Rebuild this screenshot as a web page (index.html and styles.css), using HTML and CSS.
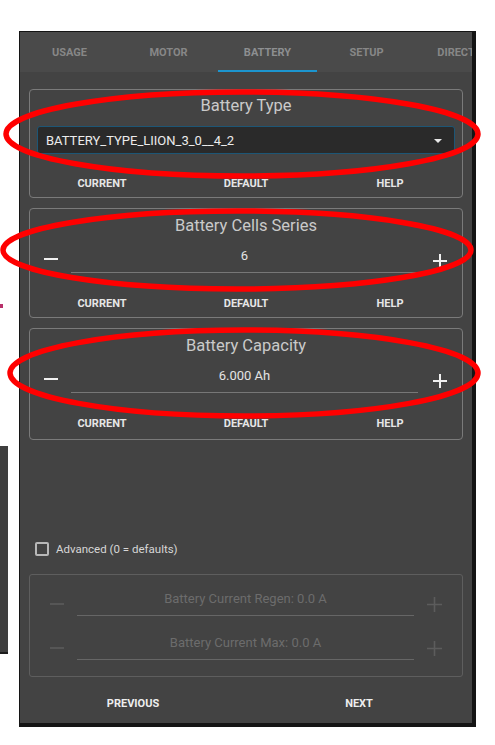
FILE: index.html
```html
<!DOCTYPE html>
<html>
<head>
<meta charset="utf-8">
<link rel="stylesheet" href="styles.css">
</head>
<body>
<div class="side-window"></div>
<div class="side-mark"></div>
<div class="phone">
  <div class="tabs">
    <div class="tab">USAGE</div>
    <div class="tab">MOTOR</div>
    <div class="tab active">BATTERY</div>
    <div class="tab">SETUP</div>
    <div class="tab tab-last">DIRECT</div>
  </div>
  <div class="content">
    <div class="card card-select">
      <div class="card-title">Battery Type</div>
      <div class="select">
        <span>BATTERY_TYPE_LIION_3_0__4_2</span>
        <svg class="caret" width="10" height="6" viewBox="0 0 10 6"><path d="M1 1h8L5 5z" fill="#e8e8e8"/></svg>
      </div>
      <div class="actions"><span>CURRENT</span><span>DEFAULT</span><span>HELP</span></div>
    </div>
    <div class="card">
      <div class="card-title">Battery Cells Series</div>
      <div class="stepper">
        <div class="step minus"><svg width="14" height="14" viewBox="0 0 14 14"><path d="M0 7h14" stroke="#f0f0f0" stroke-width="2"/></svg></div>
        <div class="field">6</div>
        <div class="step plus"><svg width="14" height="14" viewBox="0 0 14 14"><path d="M0 7h14M7 0v14" stroke="#f0f0f0" stroke-width="2"/></svg></div>
      </div>
      <div class="actions"><span>CURRENT</span><span>DEFAULT</span><span>HELP</span></div>
    </div>
    <div class="card card-last">
      <div class="card-title">Battery Capacity</div>
      <div class="stepper">
        <div class="step minus"><svg width="14" height="14" viewBox="0 0 14 14"><path d="M0 7h14" stroke="#f0f0f0" stroke-width="2"/></svg></div>
        <div class="field">6.000 Ah</div>
        <div class="step plus"><svg width="14" height="14" viewBox="0 0 14 14"><path d="M0 7h14M7 0v14" stroke="#f0f0f0" stroke-width="2"/></svg></div>
      </div>
      <div class="actions"><span>CURRENT</span><span>DEFAULT</span><span>HELP</span></div>
    </div>
    <label class="check-row"><span class="checkbox"></span><span>Advanced (0 = defaults)</span></label>
    <div class="adv-card">
      <div class="adv-row">
        <div class="astep aminus"><svg width="14" height="14" viewBox="0 0 14 14"><path d="M0 7h14" stroke="#5c5c5c" stroke-width="1.6"/></svg></div>
        <div class="afield">Battery Current Regen: 0.0 A</div>
        <div class="astep aplus"><svg width="15" height="15" viewBox="0 0 15 15"><path d="M0 7.5h15M7.5 0v15" stroke="#5c5c5c" stroke-width="1.6"/></svg></div>
      </div>
      <div class="adv-row">
        <div class="astep aminus"><svg width="14" height="14" viewBox="0 0 14 14"><path d="M0 7h14" stroke="#5c5c5c" stroke-width="1.6"/></svg></div>
        <div class="afield">Battery Current Max: 0.0 A</div>
        <div class="astep aplus"><svg width="15" height="15" viewBox="0 0 15 15"><path d="M0 7.5h15M7.5 0v15" stroke="#5c5c5c" stroke-width="1.6"/></svg></div>
      </div>
    </div>
    <div class="footer"><span>PREVIOUS</span><span>NEXT</span></div>
  </div>
</div>
<svg class="annot" width="495" height="745" viewBox="0 0 495 745">
  <g fill="none" stroke="#ff0000" stroke-width="5.5">
    <ellipse cx="242" cy="134" rx="236" ry="42"/>
    <ellipse cx="237" cy="250" rx="234" ry="39"/>
    <ellipse cx="244" cy="373" rx="234" ry="43"/>
  </g>
</svg>
</body>
</html>
```
FILE: styles.css
```css
* { box-sizing: border-box; }
html, body { margin: 0; padding: 0; background: #ffffff; }
body {
  width: 495px;
  height: 745px;
  overflow: hidden;
  position: relative;
  font-family: Roboto, "Liberation Sans", sans-serif;
}
.side-window {
  position: absolute;
  left: 0;
  top: 446px;
  width: 8px;
  height: 208px;
  background: #3f3f3f;
  border-bottom: 2px solid #1c1c1c;
}
.side-mark {
  position: absolute;
  left: 0;
  top: 304px;
  width: 3px;
  height: 4px;
  background: #b8306a;
}
.phone {
  margin: 31px 0 0 19px;
  width: 457px;
  height: 696px;
  background: #444444;
  border-style: solid;
  border-color: #141414;
  border-width: 1px 4px 4px 1px;
  display: flex;
  flex-direction: column;
  overflow: hidden;
}
.tabs {
  height: 40px;
  background: #4a4a4a;
  display: flex;
  flex-shrink: 0;
  overflow: hidden;
}
.tab {
  width: 99px;
  flex-shrink: 0;
  display: flex;
  align-items: center;
  justify-content: center;
  font-size: 11px;
  font-weight: 700;
  color: #878787;
  border-bottom: 2px solid transparent;
  padding-top: 2px;
}
.tab.tab-last { width: 80px; }
.tab.active { border-bottom-color: #1c95cf; color: #8d8f91; }
.content {
  flex: 1;
  display: flex;
  flex-direction: column;
  padding: 17px 9px 5px 9px;
  background: #434343;
}
.card {
  border: 1px solid #7a7a7a;
  border-radius: 4px;
  padding: 7px 0 0 0;
  margin-bottom: 10px;
  display: flex;
  flex-direction: column;
}
.card-select { padding-top: 6px; }
.card-last { padding-top: 7px; height: 112px; margin-bottom: 0; }
.card-title {
  height: 20px;
  line-height: 20px;
  text-align: center;
  font-size: 16.5px;
  color: #cacaca;
}
.select {
  margin: 10px 7px 0 7px;
  height: 28px;
  background: #2a2a2a;
  border: 1px solid #1d5676;
  border-radius: 3px;
  display: flex;
  align-items: center;
  justify-content: space-between;
  padding: 0 11px 0 8px;
  font-size: 13px;
  color: #ececec;
}
.caret { display: block; margin-top: 1px; }
.actions {
  height: 28px;
  display: grid;
  grid-template-columns: 1fr 1fr 1fr;
  align-items: center;
  text-align: center;
  font-size: 11px;
  font-weight: 700;
  color: #e6e6e6;
}
.card-select .actions { margin-top: 15px; }
.card .stepper + .actions { margin-top: 16px; }
.stepper {
  display: flex;
  align-items: flex-start;
  height: 37px;
}
.step {
  height: 37px;
  display: flex;
  align-items: center;
  justify-content: center;
  padding-top: 8px;
}
.minus { width: 41px; }
.plus { width: 44px; padding-top: 12px; }
.field {
  flex: 1;
  height: 37px;
  padding-top: 10px;
  line-height: 20px;
  text-align: center;
  font-size: 13px;
  color: #e4e4e4;
  border-bottom: 1px solid #777777;
}
.check-row {
  margin-top: 99px;
  height: 20px;
  display: flex;
  align-items: center;
  padding-left: 6px;
  font-size: 11.5px;
  color: #d6d6d6;
}
.checkbox {
  width: 14px;
  height: 14px;
  border: 2px solid #b8b8b8;
  border-radius: 2px;
  margin-right: 7px;
}
.adv-card {
  margin-top: 15px;
  height: 103px;
  border: 1px solid #5e5e5e;
  border-radius: 3px;
  padding-top: 4px;
  display: flex;
  flex-direction: column;
  gap: 7px;
}
.adv-row { display: flex; height: 37px; }
.astep {
  height: 37px;
  display: flex;
  align-items: center;
  justify-content: center;
  padding-top: 12px;
}
.aminus { width: 47px; padding-left: 7px; }
.aplus { width: 48px; padding-right: 8px; padding-top: 14px; }
.afield {
  flex: 1;
  height: 37px;
  padding-top: 10px;
  line-height: 20px;
  text-align: center;
  font-size: 13px;
  color: #6c6c6c;
  border-bottom: 1px solid #666666;
}
.footer {
  margin-top: 11px;
  height: 30px;
  display: grid;
  grid-template-columns: 1fr 1fr;
  align-items: center;
  text-align: center;
  font-size: 11px;
  font-weight: 700;
  color: #eeeeee;
  margin-left: -9px;
  margin-right: -9px;
}
.annot {
  position: absolute;
  left: 0;
  top: 0;
  pointer-events: none;
}
```
